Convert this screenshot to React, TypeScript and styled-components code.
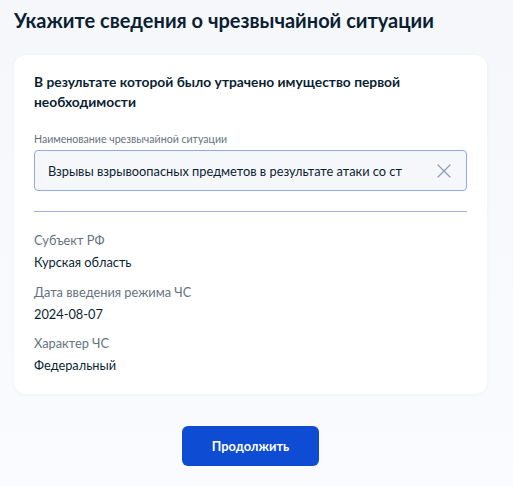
import React from "react";
import styled, { createGlobalStyle } from "styled-components";

const GlobalStyle = createGlobalStyle`
  html, body {
    margin: 0;
    padding: 0;
  }
  body {
    font-family: Lato, "Noto Sans", sans-serif;
    background: linear-gradient(180deg, #f5f7fa 0%, #f9fbfe 100%);
    min-height: 486px;
    color: #0b1f33;
  }
`;

const Page = styled.div`
  padding: 6px 26px 20px 14px;
  display: flex;
  flex-direction: column;
`;

const Title = styled.h1`
  margin: 0 0 21px;
  font-size: 20px;
  line-height: 28px;
  font-weight: 700;
  color: #0b1f33;
`;

const Card = styled.div`
  background: #ffffff;
  border-radius: 12px;
  padding: 17px 20px 20px;
  box-shadow: 0 1px 4px rgba(11, 31, 51, 0.04);
  display: flex;
  flex-direction: column;
`;

const Lead = styled.p`
  margin: 0 0 20px;
  font-size: 13.8px;
  line-height: 20px;
  font-weight: 700;
  color: #0b1f33;
`;

const Label = styled.div`
  font-size: 10.6px;
  line-height: 14px;
  color: #66727f;
  margin-bottom: 4px;
`;

const Input = styled.div`
  height: 41px;
  box-sizing: border-box;
  border: 1px solid #8faaeb;
  border-radius: 4px;
  background: #f5f7fa;
  display: flex;
  align-items: center;
  padding: 0 15px 0 13px;
  gap: 12px;
`;

const InputText = styled.span`
  flex: 1;
  font-size: 12.8px;
  line-height: 20px;
  white-space: nowrap;
  overflow: hidden;
  color: #0b1f33;
`;

const Clear = styled.button`
  border: none;
  background: none;
  padding: 0;
  width: 14px;
  height: 14px;
  display: flex;
  cursor: pointer;
`;

const Divider = styled.hr`
  margin: 20px 0 19px;
  border: none;
  border-top: 1px solid #a3b3e0;
`;

const Field = styled.div<{ $last?: boolean }>`
  display: flex;
  flex-direction: column;
  gap: 4px;
  margin-bottom: ${(p) => (p.$last ? "0" : "11.5px")};
`;

const FieldName = styled.div`
  font-size: 12.8px;
  line-height: 18px;
  color: #66727f;
`;

const FieldValue = styled.div`
  font-size: 12.8px;
  line-height: 18px;
  color: #0b1f33;
`;

const Actions = styled.div`
  display: flex;
  justify-content: center;
  margin-top: 32px;
`;

const Primary = styled.button`
  width: 137px;
  height: 40px;
  border: none;
  border-radius: 6px;
  background: #0d4cd3;
  color: #ffffff;
  font-family: Lato, "Noto Sans", sans-serif;
  font-size: 12.8px;
  font-weight: 700;
  cursor: pointer;
`;

const fields = [
  { name: "Субъект РФ", value: "Курская область" },
  { name: "Дата введения режима ЧС", value: "2024-08-07" },
  { name: "Характер ЧС", value: "Федеральный" },
];

export default function App() {
  return (
    <>
      <GlobalStyle />
      <Page>
        <Title>Укажите сведения о чрезвычайной ситуации</Title>
        <Card>
          <Lead>В результате которой было утрачено имущество первой необходимости</Lead>
          <Label>Наименование чрезвычайной ситуации</Label>
          <Input>
            <InputText>Взрывы взрывоопасных предметов в результате атаки со ст</InputText>
            <Clear aria-label="Очистить">
              <svg width="14" height="14" viewBox="0 0 14 14" fill="none">
                <path d="M1 1l12 12M13 1L1 13" stroke="#8d9bb5" strokeWidth="1.2" strokeLinecap="round" />
              </svg>
            </Clear>
          </Input>
          <Divider />
          {fields.map((f, i) => (
            <Field key={f.name} $last={i === fields.length - 1}>
              <FieldName>{f.name}</FieldName>
              <FieldValue>{f.value}</FieldValue>
            </Field>
          ))}
        </Card>
        <Actions>
          <Primary>Продолжить</Primary>
        </Actions>
      </Page>
    </>
  );
}
